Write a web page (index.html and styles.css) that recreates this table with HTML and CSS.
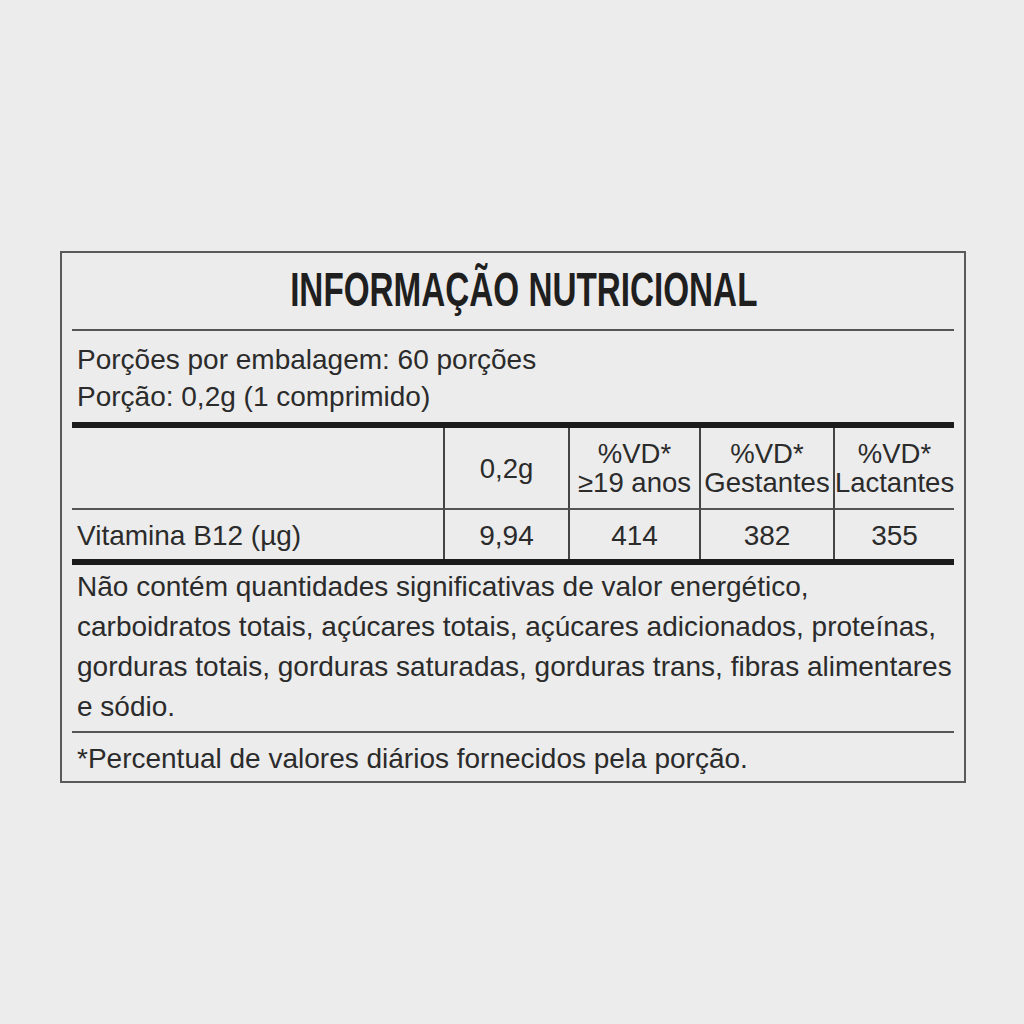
FILE: index.html
```html
<!DOCTYPE html>
<html lang="pt">
<head>
<meta charset="utf-8">
<title>Informação Nutricional</title>
<link rel="stylesheet" href="styles.css">
</head>
<body>
<div class="label">
  <div class="title"><h1>INFORMAÇÃO NUTRICIONAL</h1></div>
  <div class="serving">
    <div>Porções por embalagem: 60 porções</div>
    <div>Porção: 0,2g (1 comprimido)</div>
  </div>
  <div class="table">
    <div class="cell head first"></div>
    <div class="cell head">0,2g</div>
    <div class="cell head two"><span>%VD*</span><span>≥19 anos</span></div>
    <div class="cell head two"><span>%VD*</span><span>Gestantes</span></div>
    <div class="cell head two"><span>%VD*</span><span>Lactantes</span></div>
    <div class="cell data first">Vitamina B12 (µg)</div>
    <div class="cell data">9,94</div>
    <div class="cell data">414</div>
    <div class="cell data">382</div>
    <div class="cell data">355</div>
  </div>
  <div class="notes">Não contém quantidades significativas de valor energético,<br>carboidratos totais, açúcares totais, açúcares adicionados, proteínas,<br>gorduras totais, gorduras saturadas, gorduras trans, fibras alimentares<br>e sódio.</div>
  <div class="footnote">*Percentual de valores diários fornecidos pela porção.</div>
</div>
</body>
</html>
```
FILE: styles.css
```css
html, body {
  margin: 0;
  padding: 0;
  background: #ececec;
}
body {
  font-family: "Liberation Sans", Arial, sans-serif;
  color: #2b2b2b;
  padding-top: 251px;
  padding-left: 60px;
}
.label {
  box-sizing: border-box;
  width: 906px;
  border: 2px solid #5a5a5a;
  padding: 0 10px;
}
.title {
  height: 76px;
  display: flex;
  align-items: center;
  justify-content: center;
  border-bottom: 2px solid #555;
  padding-left: 22px;
  padding-bottom: 2px;
  box-sizing: border-box;
  height: 78px;
}
.title h1 {
  margin: 0;
  font-size: 47.5px;
  line-height: 1;
  font-weight: bold;
  color: #1f1f1f;
  letter-spacing: 0;
  transform: scaleX(0.7);
  white-space: nowrap;
}
.serving {
  font-size: 28px;
  line-height: 37px;
  padding: 10px 5px 7px;
  border-bottom: 6px solid #1b1b1b;
  white-space: nowrap;
}
.table {
  display: grid;
  grid-template-columns: 371px 125px 131px 134px 121px;
  border-bottom: 6px solid #1b1b1b;
}
.cell {
  display: flex;
  flex-direction: column;
  align-items: center;
  justify-content: center;
  border-left: 2px solid #444;
  font-size: 28px;
  white-space: nowrap;
  box-sizing: border-box;
}
.cell.first {
  border-left: none;
  align-items: flex-start;
  padding-left: 5px;
}
.head {
  height: 82px;
  border-bottom: 2px solid #555;
  line-height: 29px;
  font-size: 27.5px;
  padding-top: 1px;
}
.head.two {
  padding-top: 0;
}
.data {
  height: 49px;
  line-height: 32px;
  padding-top: 2px;
}
.notes {
  font-size: 28px;
  line-height: 40px;
  padding: 2px 5px 4px;
  border-bottom: 2px solid #555;
  white-space: nowrap;
}
.footnote {
  font-size: 28px;
  line-height: 44px;
  padding: 4px 5px 0;
  white-space: nowrap;
}
```
